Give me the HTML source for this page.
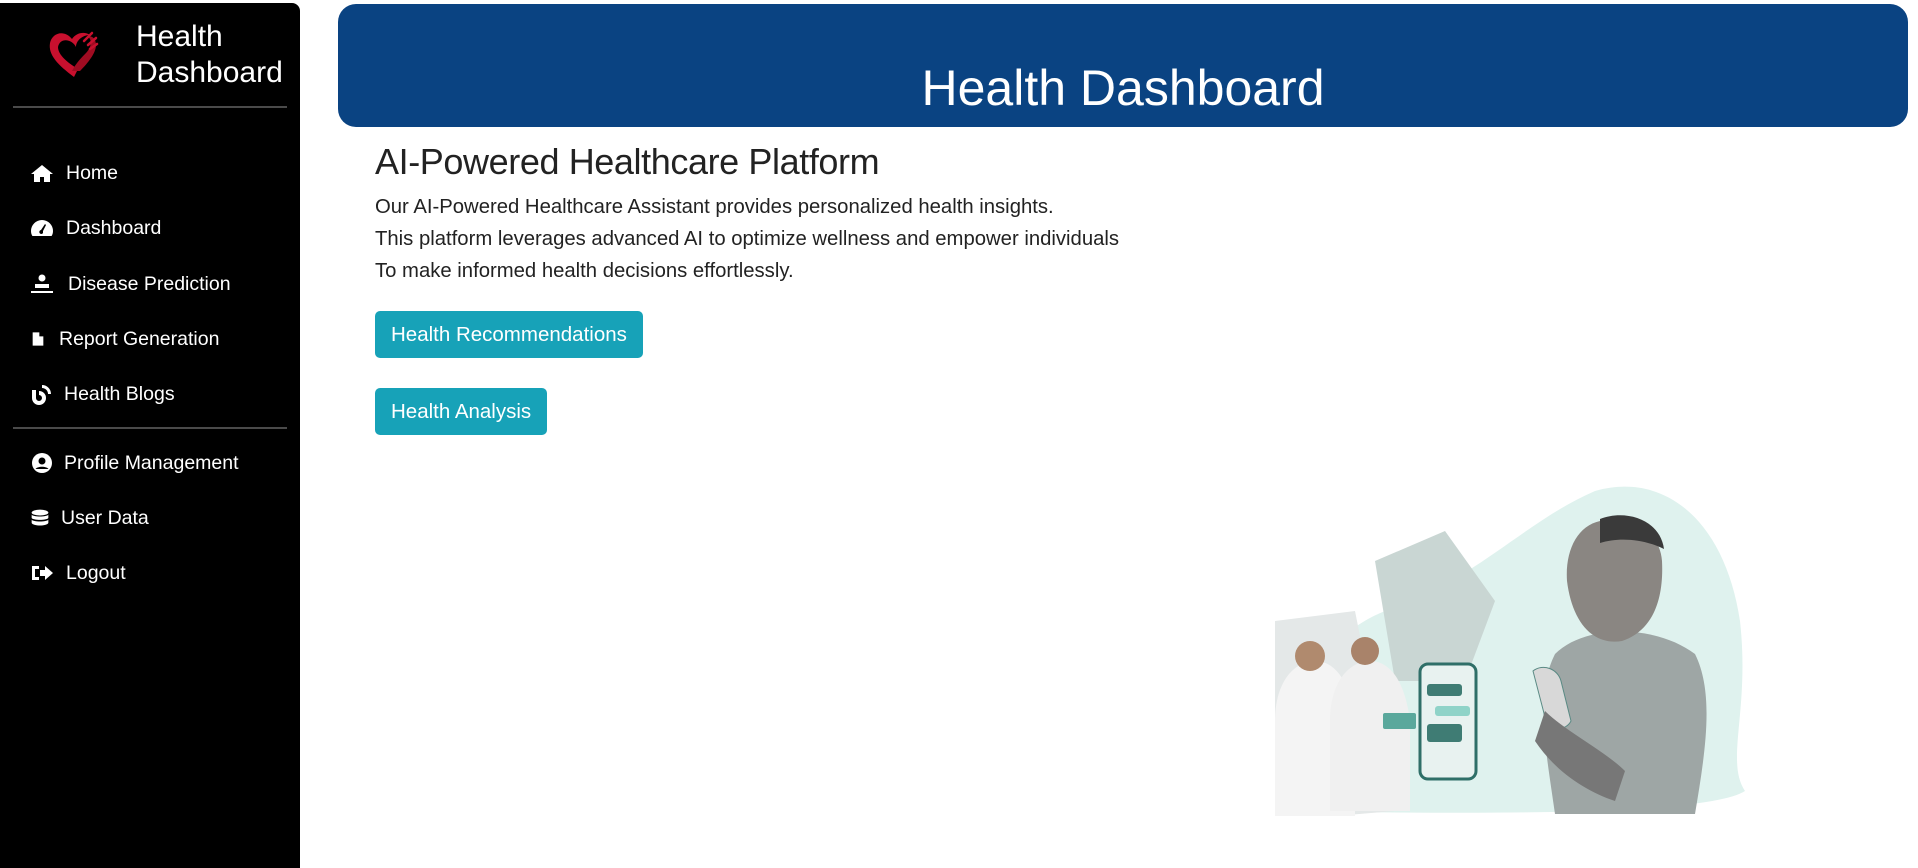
<!DOCTYPE html>
<html><head><meta charset="utf-8"><style>
*{margin:0;padding:0;box-sizing:border-box}
body{width:1918px;height:868px;background:#fff;font-family:"Liberation Sans",sans-serif;position:relative;overflow:hidden}
.side{position:absolute;left:0;top:3px;width:300px;height:865px;background:#000;border-radius:0 8px 0 0;color:#fff}
.brand{position:absolute;left:136px;top:16px;font-size:30px;line-height:36px}
.hr{position:absolute;left:13px;width:274px;height:2px;background:#4a4a4a}
.nav{position:absolute;left:30px;font-size:19.5px;display:flex;align-items:center;height:26px}
.nav svg{width:24px;height:22px;fill:#fff;margin-right:12px}
.banner{position:absolute;left:338px;top:4px;width:1570px;height:123px;background:#0a4382;border-radius:18px;color:#fff;text-align:center;font-size:50px;padding-top:55px}
h2{position:absolute;left:375px;top:141px;font-size:36px;font-weight:normal;color:#222;letter-spacing:-0.4px}
.p{position:absolute;left:375px;top:191px;font-size:20.3px;line-height:32px;color:#222}
.btn{position:absolute;left:375px;height:47px;background:#17a2b8;color:#fff;border-radius:5px;font-size:20.5px;line-height:47px;padding:0 16px}
</style></head><body>
<div class="side">
<svg style="position:absolute;left:46px;top:24px" width="56" height="52" viewBox="0 0 56 52"><path d="M28 50C12 38 2 28 4 16 6 6 18 2 26 12 30 6 38 4 44 8 36 8 30 14 30 20 26 12 14 10 12 20 12 28 22 36 32 42Z" fill="#c8102e"/><path d="M34 44C42 36 50 26 50 18 50 12 46 8 42 10 46 12 46 20 40 26 36 30 30 36 26 44Z" fill="#a00c22"/><path d="M38 14l8-8M42 18l8-7M44 22l7-5" stroke="#c8102e" stroke-width="2.5" stroke-linecap="round"/></svg>
<div class="brand">Health<br>Dashboard</div>
<div class="hr" style="top:103px"></div>
<div class="nav" style="top:157px"><svg viewBox="0 0 24 20"><path d="M12 2L1 11h3v8h6v-5h4v5h6v-8h3z"/></svg>Home</div>
<div class="nav" style="top:212px"><svg viewBox="0 0 24 20"><path d="M12 2A11 11 0 0 0 1 13c0 2 .5 3.5 1.4 5h19.2c.9-1.5 1.4-3 1.4-5A11 11 0 0 0 12 2zm1 13a2 2 0 1 1-2-3l4-6 1 1-3 6z"/></svg>Dashboard</div>
<div class="nav" style="top:268px"><svg viewBox="0 0 24 20" style="margin-right:14px"><circle cx="12" cy="4" r="3.5"/><path d="M5 10h14v4H5zM1 17h22v2H1z"/></svg>Disease Prediction</div>
<div class="nav" style="top:323px"><svg viewBox="0 0 24 20" style="width:16px;margin-right:13px"><path d="M4 0h10l6 6v14H4zM14 0v6h6" /></svg>Report Generation</div>
<div class="nav" style="top:378px"><svg viewBox="0 0 24 20" style="margin-right:10px"><path d="M2 6h4v8a3 3 0 1 0 3-3V7a7 7 0 1 1-7 7zM12 1a9 9 0 0 1 9 9h-3a6 6 0 0 0-6-6z"/></svg>Health Blogs</div>
<div class="hr" style="top:424px"></div>
<div class="nav" style="top:447px"><svg viewBox="0 0 24 20" style="margin-right:10px"><circle cx="12" cy="10" r="10"/><circle cx="12" cy="8" r="3.5" fill="#000"/><path d="M5.5 16c2-3 11-3 13 0" fill="#000"/></svg>Profile Management</div>
<div class="nav" style="top:502px"><svg viewBox="0 0 24 20" style="width:20px;margin-right:11px"><ellipse cx="12" cy="3.5" rx="10" ry="3.5"/><path d="M2 6c2 3 18 3 20 0v4c-2 3-18 3-20 0zM2 12c2 3 18 3 20 0v4c-2 4-18 4-20 0z"/></svg>User Data</div>
<div class="nav" style="top:557px"><svg viewBox="0 0 24 20"><path d="M2 3h7v3H5v8h4v3H2zM10 7h5V3l8 7-8 7v-4h-5z"/></svg>Logout</div>
</div>
<div class="banner">Health Dashboard</div>
<h2>AI-Powered Healthcare Platform</h2>
<div class="p">Our AI-Powered Healthcare Assistant provides personalized health insights.<br>This platform leverages advanced AI to optimize wellness and empower individuals<br>To make informed health decisions effortlessly.</div>
<div class="btn" style="top:311px">Health Recommendations</div>
<div class="btn" style="top:388px">Health Analysis</div>
<svg style="position:absolute;left:1245px;top:481px" width="510" height="335" viewBox="0 0 510 335">
<path d="M60 330C20 300 40 170 140 130 230 100 280 40 350 10 420 -10 480 40 495 140 505 230 480 280 500 310 470 330 300 335 60 330Z" fill="#dff2ee"/>
<path d="M130 80L200 50 250 120 220 200 150 200Z" fill="#c9d6d3"/>
<path d="M30 140L110 130 150 330 30 340Z" fill="#e4e8e8"/>
<path d="M30 240c0-40 20-60 40-60s35 20 40 60v95H30z" fill="#f4f4f4"/>
<circle cx="65" cy="175" r="15" fill="#b08a6e"/>
<path d="M85 240c0-40 20-60 40-60s35 20 40 60v90H85z" fill="#f0f0f0"/>
<circle cx="120" cy="170" r="14" fill="#a9836a"/>
<rect x="175" y="183" width="56" height="115" rx="8" fill="#e8f2f0" stroke="#2f6f68" stroke-width="3"/>
<rect x="182" y="203" width="35" height="12" rx="3" fill="#3f7c74"/>
<rect x="190" y="225" width="35" height="10" rx="3" fill="#8fd3c8"/>
<rect x="182" y="243" width="35" height="18" rx="3" fill="#3f7c74"/>
<rect x="138" y="232" width="33" height="16" rx="2" fill="#5aa89c"/>
<path d="M310 333c-10-70-20-120 0-160 30-30 100-30 140 0 20 40 10 100 0 160z" fill="#9ea6a5"/>
<path d="M355 40c30-8 60 10 62 40 2 40-10 70-40 80-30 5-50-20-55-60-2-30 10-55 33-60z" fill="#8a8682"/>
<path d="M355 38c25-10 60 0 64 30-20-10-45-12-64-6z" fill="#3a3a3a"/>
<path d="M288 190c10-8 25-2 28 10l10 40c-5 10-20 10-25 0z" fill="#d8d8d8" stroke="#5a8a84"/>
<path d="M300 230c20 20 60 40 80 60l-10 30c-30-10-60-30-80-60z" fill="#777"/>
</svg>
</body></html>
